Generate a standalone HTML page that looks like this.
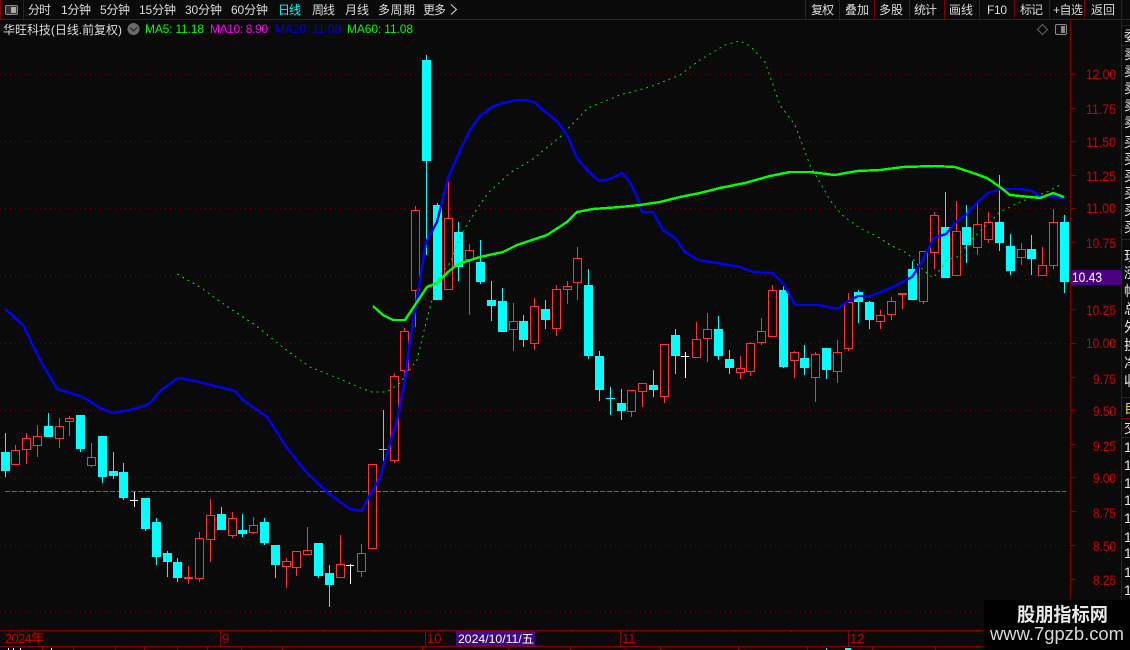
<!DOCTYPE html>
<html lang="zh">
<head>
<meta charset="utf-8">
<title>华旺科技</title>
<style>
html,body{margin:0;padding:0;background:#0a0a0a;width:1130px;height:650px;overflow:hidden}
svg{display:block}
text{font-family:"Liberation Sans","Noto Sans CJK SC",sans-serif}
.t text{font-size:12px;fill:#dcdcdc}
.ax text{font-size:14px;fill:#d00000}
.s text{font-size:14px;fill:#e8e8e8}
</style>
</head>
<body>
<svg width="1130" height="650" viewBox="0 0 1130 650" xmlns="http://www.w3.org/2000/svg">
<rect width="1130" height="650" fill="#0a0a0a"/>

<!-- grid -->
<path d="M0 74.5H1068M0 141.5H1068M0 208.5H1068M0 275.5H1068M0 343.5H1068M0 410.5H1068M0 477.5H1068M0 545.5H1068M0 612.5H1068" stroke="#740000" stroke-width="1" stroke-dasharray="1 4" fill="none" shape-rendering="crispEdges"/>
<path d="M5 491.5H1066" stroke="#cf22cf" stroke-width="1" stroke-dasharray="5 2" fill="none" shape-rendering="crispEdges"/>

<!-- candles -->
<g shape-rendering="crispEdges">
<path fill="none" stroke="#00ffff" stroke-width="1" d="M5.5 433V477M48.5 413V437M80.5 415V452M102.5 436V483M113.5 452V479M123.5 463V500M145.5 498V531M156.5 518V565M167.5 551V577M177.5 558V582M221.5 507V530M242.5 514V537M264.5 518V545M275.5 545V578M318.5 543V578M329.5 565V607M383.5 410V461M379 449.5H388M426.5 55V255M437.5 203V300M458.5 222V281M480.5 240V284M491.5 281V321M502.5 288V332M523.5 315V347M545.5 300V329M588.5 269V359M599.5 351V401M610.5 387V415M606 398.5H615M621.5 389V420M653.5 370V397M675.5 329V374M718.5 316V360M729.5 350V374M783.5 285V368M804.5 345V375M826.5 348V379M858.5 290V323M869.5 301V329M912.5 261V300M945.5 192V278M966.5 205V263M999.5 175V251M1010.5 234V275M1031.5 235V275M1064.5 215V293"/>
<path fill="#00ffff" d="M1 452h9V471h-9zM44 426h9V437h-9zM76 415h9V449h-9zM98 436h9V477h-9zM109 471h9V476h-9zM119 472h9V498h-9zM141 498h9V529h-9zM152 522h9V557h-9zM163 553h9V562h-9zM173 562h9V578h-9zM217 514h9V530h-9zM238 530h9V534h-9zM260 522h9V543h-9zM271 545h9V565h-9zM314 543h9V576h-9zM325 573h9V585h-9zM422 60h9V161h-9zM433 205h9V300h-9zM454 232h9V267h-9zM476 262h9V282h-9zM487 300h9V306h-9zM498 301h9V332h-9zM519 321h9V340h-9zM541 309h9V320h-9zM584 285h9V356h-9zM595 356h9V390h-9zM617 403h9V411h-9zM649 385h9V390h-9zM671 335h9V356h-9zM714 329h9V356h-9zM725 359h9V368h-9zM779 290h9V367h-9zM800 358h9V368h-9zM822 348h9V370h-9zM854 292h9V302h-9zM865 302h9V320h-9zM908 269h9V300h-9zM941 227h9V278h-9zM962 227h9V245h-9zM995 222h9V243h-9zM1006 246h9V271h-9zM1027 249h9V259h-9zM1060 222h9V282h-9z"/>
<path fill="none" stroke="#ff3232" stroke-width="1" d="M15.5 445V465M26.5 433V464M37.5 425V457M59.5 418V448M69.5 416V436M91.5 443V467M188.5 566V584M199.5 532V582M210.5 499V562M232.5 512V538M253.5 517V534M286.5 558V588M296.5 551V576M307.5 527V554M340.5 535V577M361.5 544V577M372.5 464V549M394.5 373V463M404.5 328V380M415.5 206V327M448.5 182V289M469.5 244V315M513.5 303V351M534.5 298V350M556.5 285V336M567.5 281V304M577.5 247V300M631.5 390V417M642.5 383V407M664.5 344V403M696.5 322V358M707.5 313V362M740.5 356V379M750.5 342V376M761.5 318V345M772.5 285V337M794.5 351V378M815.5 352V402M837.5 340V383M848.5 293V351M880.5 310V329M891.5 297V320M902.5 293V309M923.5 251V304M934.5 212V269M956.5 201V275M977.5 204V255M988.5 212V243M1021.5 243V265M1042.5 247V275M1053.5 209V269"/>
<path fill="#ff3232" d="M184 577h9v2h-9zM898 293h9v2h-9z"/>
<path fill="#0a0a0a" stroke="#ff3232" stroke-width="1" d="M11.5 450.5h8V464.5h-8zM22.5 438.5h8V449.5h-8zM33.5 436.5h8V445.5h-8zM55.5 426.5h8V438.5h-8zM65.5 418.5h8V421.5h-8zM87.5 457.5h8V465.5h-8zM195.5 538.5h8V578.5h-8zM206.5 515.5h8V539.5h-8zM228.5 518.5h8V535.5h-8zM249.5 525.5h8V532.5h-8zM282.5 561.5h8V566.5h-8zM292.5 551.5h8V567.5h-8zM303.5 550.5h8V554.5h-8zM336.5 564.5h8V577.5h-8zM357.5 553.5h8V571.5h-8zM368.5 464.5h8V548.5h-8zM390.5 376.5h8V460.5h-8zM400.5 331.5h8V370.5h-8zM411.5 210.5h8V290.5h-8zM444.5 218.5h8V289.5h-8zM465.5 250.5h8V259.5h-8zM509.5 321.5h8V329.5h-8zM530.5 306.5h8V343.5h-8zM552.5 289.5h8V328.5h-8zM563.5 286.5h8V289.5h-8zM573.5 258.5h8V282.5h-8zM627.5 390.5h8V411.5h-8zM638.5 383.5h8V391.5h-8zM660.5 344.5h8V396.5h-8zM692.5 339.5h8V357.5h-8zM703.5 329.5h8V338.5h-8zM736.5 368.5h8V372.5h-8zM746.5 343.5h8V371.5h-8zM757.5 331.5h8V342.5h-8zM768.5 290.5h8V336.5h-8zM790.5 352.5h8V360.5h-8zM811.5 354.5h8V377.5h-8zM833.5 352.5h8V371.5h-8zM844.5 302.5h8V348.5h-8zM876.5 315.5h8V321.5h-8zM887.5 301.5h8V314.5h-8zM919.5 251.5h8V301.5h-8zM930.5 215.5h8V252.5h-8zM952.5 231.5h8V275.5h-8zM973.5 224.5h8V247.5h-8zM984.5 222.5h8V239.5h-8zM1017.5 249.5h8V257.5h-8zM1038.5 265.5h8V275.5h-8zM1049.5 222.5h8V265.5h-8z"/>
<path fill="none" stroke="#ffffff" stroke-width="1" d="M134.5 492V507M130 500.5H138M350.5 564V584M346 565.5H354M685.5 352V378M681 356.5H689"/>
</g>

<!-- moving averages -->
<polyline shape-rendering="crispEdges" fill="none" stroke="#00e000" stroke-width="1" stroke-dasharray="2 4" points="177,274 200,287 225,305 255,325 285,349 310,367 340,379 363,389 372,392 387,392 400,383 417,360 425,327 432,300 440,275 450,263 460,237 475,212 488,193 510,173 533,159 560,137 588,108 620,95 650,87 680,75 700,60 725,45 740,41 750,46 765,62 780,105 795,125 810,165 830,200 842,215 860,228 878,237 890,245 907,253 920,267 933,278 940,270 947,260 957,257 973,238 990,222 1000,212 1020,202 1047,192 1062,184"/>
<polyline shape-rendering="crispEdges" fill="none" stroke="#0000ff" stroke-width="2.4" stroke-linejoin="round" points="5,309 23,325 40,360 57,389 70,393 80,396 88,400 100,408 113,413 130,410 147,405 153,400 160,391 178,378 195,381 215,386 235,391 243,400 267,417 287,448 307,473 328,493 350,509 362,511 368,498 380,478 388,450 397,420 405,380 410,340 420,280 426,242 437,222 448,178 458,155 470,130 480,116 492,107 503,103 517,100 525,100 534,102 543,110 557,121 567,135 577,158 587,170 599,181 610,179 622,173 630,182 637,197 642,212 653,212 663,230 675,238 685,252 698,260 717,263 740,267 753,272 772,273 783,283 795,305 820,305 837,309 847,302 858,296 870,296 893,287 912,277 920,265 934,238 946,234 955,223 968,213 978,202 988,193 1000,189 1020,189 1032,191 1040,196 1053,197 1064,198"/>
<polyline shape-rendering="crispEdges" fill="none" stroke="#00ff00" stroke-width="2.4" stroke-linejoin="round" points="373,306 383,315 393,320 405,320 415,305 427,287 437,283 448,272 458,264 480,257 503,252 517,245 547,235 567,222 577,212 593,209 620,207 640,205 660,202 680,197 700,193 720,188 745,183 770,176 790,172 810,172 835,175 857,171 880,170 903,167 935,166 955,167 973,173 987,178 1000,187 1010,195 1040,198 1053,193 1064,197"/>

<!-- top bar -->
<path d="M0 19.5H1130M0.5 0V19M23.5 0V19M805.5 0V19M839.5 0V19M874.5 0V19M909.5 0V19M944.5 0V19M979.5 0V19M1014.5 0V19M1049.5 0V19M1084.5 0V19M1121.5 0V19" stroke="#7d0000" stroke-width="1" fill="none" shape-rendering="crispEdges"/>
<rect x="5.5" y="5.5" width="12" height="9" rx="1.5" fill="#333" stroke="#8a8a8a"/>
<rect x="11" y="7" width="5" height="6" fill="#aaa"/>
<g class="t">
<text x="28" y="14" textLength="23">分时</text>
<text x="61" y="14" textLength="30">1分钟</text>
<text x="100" y="14" textLength="30">5分钟</text>
<text x="139" y="14" textLength="37">15分钟</text>
<text x="185" y="14" textLength="37">30分钟</text>
<text x="231" y="14" textLength="37">60分钟</text>
<text x="278" y="14" textLength="23" style="fill:#00ffff">日线</text>
<text x="312" y="14" textLength="23">周线</text>
<text x="345" y="14" textLength="24">月线</text>
<text x="378" y="14" textLength="37">多周期</text>
<text x="423" y="14" textLength="23">更多</text>
<text x="811" y="14" textLength="23">复权</text>
<text x="845" y="14" textLength="24">叠加</text>
<text x="879" y="14" textLength="24">多股</text>
<text x="914" y="14" textLength="23">统计</text>
<text x="949" y="14" textLength="24">画线</text>
<text x="987" y="14" textLength="20">F10</text>
<text x="1020" y="14" textLength="23">标记</text>
<text x="1053" y="14" textLength="30">+自选</text>
<text x="1091" y="14" textLength="24">返回</text>
</g>
<path d="M451 4.5L456.5 9.5L451 14.5" fill="none" stroke="#dcdcdc" stroke-width="1"/>

<!-- title row -->
<text x="3" y="34" font-size="12" fill="#dcdcdc" textLength="119">华旺科技(日线.前复权)</text>
<circle cx="133.5" cy="29" r="6" fill="#6a6a6a"/>
<path d="M130 27.5L133.5 31L137 27.5" fill="none" stroke="#222" stroke-width="1.2"/>
<text x="145" y="33" font-size="12" fill="#00ff00" textLength="59">MA5: 11.18</text>
<text x="210" y="33" font-size="12" fill="#ff00ff" textLength="58">MA10: 8.90</text>
<text x="275" y="33" font-size="12" fill="#0000e0" textLength="66">MA20: 11.08</text>
<text x="347" y="33" font-size="12" fill="#00ff00" textLength="66">MA60: 11.08</text>
<path d="M1042.5 24.5L1047.5 29.5L1042.5 34.5L1037.5 29.5Z" fill="none" stroke="#666" stroke-width="1"/>
<rect x="1055.5" y="24.5" width="11" height="10" rx="1.5" fill="#111" stroke="#8a8a8a"/>
<rect x="1061" y="26" width="4" height="7" fill="#8a8a8a"/>

<!-- price axis -->
<path d="M1070.5 19V630M1071 74.5h5M1071 108.5h5M1071 141.5h5M1071 175.5h5M1071 208.5h5M1071 242.5h5M1071 275.5h5M1071 309.5h5M1071 343.5h5M1071 377.5h5M1071 410.5h5M1071 444.5h5M1071 477.5h5M1071 511.5h5M1071 545.5h5M1071 579.5h5M1071 612.5h5" stroke="#7d0000" stroke-width="1" fill="none" shape-rendering="crispEdges"/>
<g class="ax">
<text x="1086" y="79" textLength="30" lengthAdjust="spacingAndGlyphs">12.00</text>
<text x="1086" y="114" textLength="30" lengthAdjust="spacingAndGlyphs">11.75</text>
<text x="1086" y="147" textLength="30" lengthAdjust="spacingAndGlyphs">11.50</text>
<text x="1086" y="181" textLength="30" lengthAdjust="spacingAndGlyphs">11.25</text>
<text x="1086" y="213" textLength="30" lengthAdjust="spacingAndGlyphs">11.00</text>
<text x="1086" y="248" textLength="30" lengthAdjust="spacingAndGlyphs">10.75</text>
<text x="1086" y="315" textLength="30" lengthAdjust="spacingAndGlyphs">10.25</text>
<text x="1086" y="348" textLength="30" lengthAdjust="spacingAndGlyphs">10.00</text>
<text x="1093" y="384" textLength="23" lengthAdjust="spacingAndGlyphs">9.75</text>
<text x="1093" y="416" textLength="23" lengthAdjust="spacingAndGlyphs">9.50</text>
<text x="1093" y="451" textLength="23" lengthAdjust="spacingAndGlyphs">9.25</text>
<text x="1093" y="483" textLength="23" lengthAdjust="spacingAndGlyphs">9.00</text>
<text x="1093" y="518" textLength="23" lengthAdjust="spacingAndGlyphs">8.75</text>
<text x="1093" y="551" textLength="23" lengthAdjust="spacingAndGlyphs">8.50</text>
<text x="1093" y="585" textLength="23" lengthAdjust="spacingAndGlyphs">8.25</text>
</g>
<rect x="1071" y="270" width="50" height="15" fill="#4b0082"/>
<text x="1072" y="282" font-size="14" fill="#fff" textLength="30" lengthAdjust="spacingAndGlyphs">10.43</text>

<!-- right sidebar -->
<path d="M1121.5 19V650M1122 25.5H1130M1122 45.5H1130M1122 239.5H1130M1122 397.5H1130M1122 418.5H1130M1122 437.5H1130" stroke="#7d0000" stroke-width="1" fill="none" shape-rendering="crispEdges"/>
<svg x="1124" y="26" width="6" height="600" viewBox="1124 26 6 600" class="s">
<text x="1124" y="41">委</text>
<text x="1124" y="59">卖</text><text x="1124" y="76">卖</text><text x="1124" y="93">卖</text><text x="1124" y="110">卖</text><text x="1124" y="127">卖</text>
<text x="1124" y="147">买</text><text x="1124" y="164">买</text><text x="1124" y="181">买</text><text x="1124" y="198">买</text><text x="1124" y="215">买</text><text x="1124" y="232">买</text>
<text x="1124" y="261">现</text><text x="1124" y="278">涨</text><text x="1124" y="296">幅</text><text x="1124" y="314">总</text><text x="1124" y="332">外</text><text x="1124" y="350">换</text><text x="1124" y="368">净</text><text x="1124" y="386">收</text>
<text x="1124" y="413" style="fill:#e0e000">自</text>
<text x="1124" y="433">交</text>
<text x="1124" y="452">1</text><text x="1124" y="470">1</text><text x="1124" y="488">1</text><text x="1124" y="505">1</text><text x="1124" y="523">1</text><text x="1124" y="542">1</text><text x="1124" y="558">1</text><text x="1124" y="577">1</text><text x="1124" y="595">1</text>
</svg>

<!-- date axis -->
<path d="M0 630.5H1130M0 646.5H1130M220.5 630V646M425.5 630V646M620.5 630V646M848.5 630V646M271.5 630V632M323.5 630V632M374.5 630V632M571.5 630V632M677.5 630V632M734.5 630V632M791.5 630V632M42.5 647V650M73.5 647V650M115.5 647V650M144.5 647V650M177.5 647V650M207.5 647V650M241.5 647V650M282.5 647V650M422.5 647V650M508.5 647V650M570.5 647V650M660.5 647V650M738.5 647V650M807.5 647V650M872.5 647V650M935.5 647V650" stroke="#8b0000" stroke-width="1" fill="none" shape-rendering="crispEdges"/>
<text x="5" y="643" font-size="13" fill="#c80000" textLength="39">2024年</text>
<text x="222" y="643" font-size="13" fill="#c80000">9</text>
<text x="427" y="643" font-size="13" fill="#c80000">10</text>
<text x="622" y="643" font-size="13" fill="#c80000">11</text>
<text x="850" y="643" font-size="13" fill="#c80000">12</text>
<rect x="456" y="631" width="79" height="15" fill="#3f0a86"/>
<text x="458" y="643" font-size="12" fill="#fff" textLength="76" lengthAdjust="spacingAndGlyphs">2024/10/11/五</text>
<path d="M8 648h1v2H8zM13 648h1v2h-1zM20 648h1v2h-1zM51 648h1v2h-1z" fill="#fff"/>
<path d="M826 648h1v2h-1zM845 648h6v2h-6z" fill="#00ffff"/>

<!-- watermark -->
<rect x="984" y="600" width="146" height="50" fill="#000"/>
<text x="1017" y="621" font-size="19" font-weight="700" fill="#e8e8e8" textLength="91" lengthAdjust="spacingAndGlyphs">股朋指标网</text>
<text x="990" y="640" font-size="18" fill="#d8d8d8" textLength="134" lengthAdjust="spacingAndGlyphs">www.7gpzb.com</text>
</svg>
</body>
</html>
